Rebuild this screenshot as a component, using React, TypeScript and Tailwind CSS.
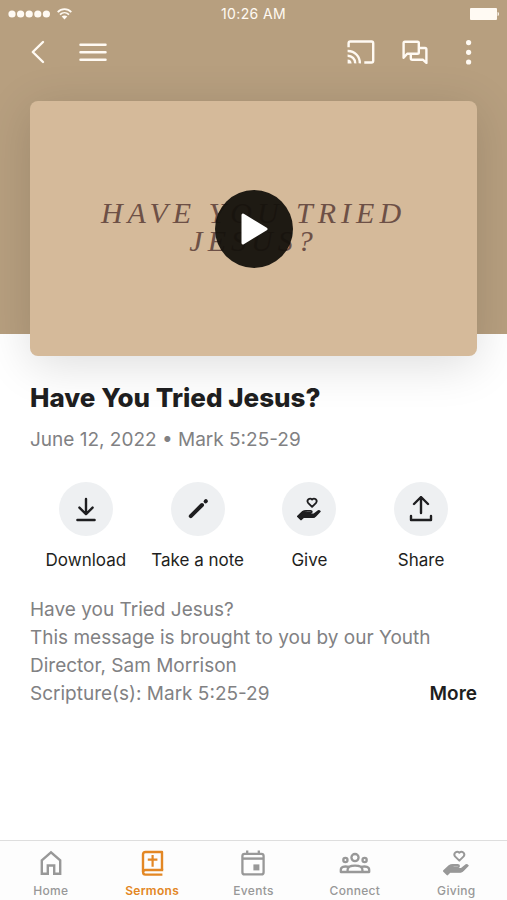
import React from 'react';

const HandHeartIcon: React.FC<{ className?: string }> = ({ className }) => (
  <svg viewBox="0 0 78 78" fill="none" className={className} aria-hidden="true">
    <path d="M49 32 36 19c-6-9 5-18 13-11 8-7 19 2 13 11Z" stroke="currentColor" strokeWidth="6" strokeLinejoin="round" />
    <path
      d="M3 63 19 48q4-3 10-3h15q4 0 4 3t-4 4H32M3 63l10 10 8-8h31q4 0 8-4l14-14"
      fill="none"
      stroke="currentColor"
      strokeWidth="6"
      strokeLinecap="round"
      strokeLinejoin="round"
    />
    <path d="M3 63 20 47l12 0v7h22l14-11q4-2 7 2L61 62q-4 5-9 5H21l-8 7Z" fill="currentColor" />
  </svg>
);

const actions = [
  {
    label: 'Download',
    icon: (
      <svg width="26" height="26" viewBox="0 0 26 26" fill="none" stroke="currentColor" strokeWidth="2.4" strokeLinecap="round" strokeLinejoin="round" aria-hidden="true">
        <path d="M13 3v15M6.4 11.6l6.6 6.6 6.6-6.6M4.4 24h17.2" />
      </svg>
    ),
  },
  {
    label: 'Take a note',
    icon: (
      <svg width="26" height="26" viewBox="0 0 26 26" fill="none" stroke="currentColor" strokeWidth="4" strokeLinecap="round" aria-hidden="true">
        <path d="M5.8 20.2 17 9" />
        <path d="M20.6 5.4 20.9 5.1" />
      </svg>
    ),
  },
  { label: 'Give', icon: <HandHeartIcon className="w-6 h-6" /> },
  {
    label: 'Share',
    icon: (
      <svg width="26" height="26" viewBox="0 0 26 26" fill="none" stroke="currentColor" strokeWidth="2.4" strokeLinecap="round" strokeLinejoin="round" aria-hidden="true">
        <path d="M13 17V2M6 8l7-7 7 7M3 20v4h20v-4" />
      </svg>
    ),
  },
];

const tabs = [
  {
    label: 'Home',
    icon: (
      <svg width="28" height="28" viewBox="0 0 28 28" fill="none" stroke="currentColor" strokeWidth="2.4" aria-hidden="true">
        <path d="M4.8 11.4 14 3.3l9.2 8.1v13.3h-6v-8.2h-6.4v8.2h-6Z" />
      </svg>
    ),
  },
  {
    label: 'Sermons',
    active: true,
    icon: (
      <svg width="28" height="28" viewBox="0 0 28 28" fill="none" stroke="currentColor" strokeWidth="2.4" strokeLinejoin="round" aria-hidden="true">
        <path d="M24 21V3H7.6Q5 3 5 5.6V23" />
        <path d="M25.2 21H7.4a2.3 2.3 0 0 0 0 4.6h17" />
        <path d="M14.6 6v11.8M9.8 10.6h9.6" strokeWidth="2.2" />
      </svg>
    ),
  },
  {
    label: 'Events',
    icon: (
      <svg width="28" height="28" viewBox="0 0 28 28" fill="none" stroke="currentColor" strokeWidth="2.3" aria-hidden="true">
        <rect x="3.4" y="4.8" width="21.2" height="20.6" rx="2.2" />
        <path d="M3.6 9.6h20.8" strokeWidth="2.4" />
        <path d="M8.2 1.5V5M19.8 1.5V5" />
        <rect x="14.4" y="15.4" width="6" height="6" fill="currentColor" stroke="none" />
      </svg>
    ),
  },
  {
    label: 'Connect',
    icon: (
      <svg width="32" height="28" viewBox="0 0 32 28" fill="none" stroke="currentColor" strokeWidth="2.3" strokeLinejoin="round" aria-hidden="true">
        <circle cx="16" cy="8.6" r="3.6" />
        <circle cx="6.4" cy="11" r="2.1" />
        <circle cx="25.6" cy="11" r="2.1" />
        <path d="M8.6 23v-2.2c0-3 3-4.2 7.4-4.2s7.4 1.2 7.4 4.2V23" />
        <path d="M9.8 17.9c-4.8-1-8 0-8 3.1v2h28.4v-2c0-3.1-3.2-4.1-8-3.1" />
      </svg>
    ),
  },
  { label: 'Giving', icon: <HandHeartIcon className="w-[26px] h-[26px]" /> },
];

const StatusBar: React.FC = () => (
  <div className="h-7 px-2 grid grid-cols-3 items-center">
    <div className="flex items-center gap-2">
      <svg width="43" height="8" viewBox="0 0 43 8" fill="currentColor" aria-hidden="true">
        {[4, 12.6, 21.2, 29.8, 38.4].map(x => (
          <circle key={x} cx={x} cy="4" r="3.6" />
        ))}
      </svg>
      <svg width="15" height="12" viewBox="0 0 15 12" fill="none" stroke="currentColor" strokeWidth="1.7" aria-hidden="true" className="-ml-0.5">
        <path d="M.7 4.2C4.5.2 10.5.2 14.3 4.2M3 6.7c2.6-2.6 6.4-2.6 9 0" />
        <path d="M4.7 8.6c1.6-1.6 4-1.6 5.6 0L7.5 11.6Z" fill="currentColor" stroke="none" />
      </svg>
    </div>
    <span className="text-center text-[14px] leading-5 tracking-wide">10:26 AM</span>
    <svg width="29" height="12" viewBox="0 0 29 12" fill="currentColor" className="justify-self-end" aria-hidden="true">
      <rect x="0" y="0" width="27" height="12" rx="1" />
      <path d="M27.6 4q1.4 0 1.4 2t-1.4 2Z" />
    </svg>
  </div>
);

const Toolbar: React.FC = () => (
  <div className="h-12 px-6 flex items-center justify-between">
    <div className="flex items-center gap-7">
      <button aria-label="Back">
        <svg width="27" height="27" viewBox="0 0 27 27" fill="none" stroke="currentColor" strokeWidth="2.4" strokeLinecap="round" strokeLinejoin="round">
          <path d="M19 3 8.8 13 19 23" />
        </svg>
      </button>
      <button aria-label="Menu">
        <svg width="28" height="27" viewBox="0 0 28 27" fill="none" stroke="currentColor" strokeWidth="2.5" strokeLinecap="round">
          <path d="M1.5 5.8h25M1.5 13.3h25M1.5 20.8h25" />
        </svg>
      </button>
    </div>
    <div className="flex items-center gap-[26px]">
      <button aria-label="Cast">
        <svg width="28" height="27" viewBox="0 0 28 27" fill="none" stroke="currentColor" strokeWidth="2.4">
          <path d="M1.6 8.2V4.2q0-1.7 1.7-1.7h21.2q1.7 0 1.7 1.7v17.6q0 1.7-1.7 1.7h-7.2" />
          <path d="M.6 12a11.8 11.8 0 0 1 12.2 12.4M.6 16.8a7.4 7.4 0 0 1 7.6 7.6" />
          <path d="M.6 20.6a4 4 0 0 1 4 3.8h-4Z" fill="currentColor" stroke="none" />
        </svg>
      </button>
      <button aria-label="Chat">
        <svg width="28" height="27" viewBox="0 0 28 27" fill="none" stroke="currentColor" strokeWidth="2.4" strokeLinejoin="round">
          <path d="M2.6 18.8V4q0-1.3 1.3-1.3h12.6q1.3 0 1.3 1.3v9.5q0 1.3-1.3 1.3H6.2Z" />
          <path d="M18 9h6q1.4 0 1.4 1.4v13.5l-3.6-3.2H11.2q-1.4 0-1.4-1.4V15" />
        </svg>
      </button>
      <button aria-label="More options">
        <svg width="28" height="27" viewBox="0 0 28 27" fill="currentColor">
          <circle cx="13.6" cy="3.6" r="2.6" />
          <circle cx="13.6" cy="13.3" r="2.6" />
          <circle cx="13.6" cy="23" r="2.6" />
        </svg>
      </button>
    </div>
  </div>
);

const App: React.FC = () => {
  return (
    <div className="min-h-screen flex flex-col bg-white font-['Inter',sans-serif] text-[#1e1e20]">
      <header className="bg-[#b79f7f] text-[#fffaf3]">
        <StatusBar />
        <Toolbar />
        <div className="px-[30px] pt-[25px]">
          <div className="relative -mb-[22px] aspect-[447/255] rounded-lg bg-[#d5ba9a] shadow-[0_8px_48px_rgba(0,0,0,0.14)] flex items-center justify-center">
            <p className="pb-1 text-center font-['Liberation_Serif',serif] italic text-[30px] leading-7 tracking-[5px] text-[#6d5046]">
              HAVE YOU TRIED
              <br />
              JESUS?
            </p>
            <button aria-label="Play" className="absolute inset-0 m-auto w-[78px] h-[78px] rounded-full bg-[#14110c]/95 text-white flex items-center justify-center">
              <svg width="28" height="34" viewBox="0 0 28 34" fill="currentColor" stroke="currentColor" strokeWidth="3" strokeLinejoin="round">
                <path d="M3 3v28l23-14Z" />
              </svg>
            </button>
          </div>
        </div>
      </header>

      <main className="relative px-[30px] pt-12 pb-8">
        <h1 className="text-[26px] leading-8 font-extrabold">Have You Tried Jesus?</h1>
        <p className="mt-3 text-[19px] leading-7 text-[#818183]">June 12, 2022 • Mark 5:25-29</p>

        <div className="mt-7 grid grid-cols-4">
          {actions.map(action => (
            <button key={action.label} className="flex flex-col items-center gap-3 whitespace-nowrap text-[17px] leading-6">
              <span className="w-[54px] h-[54px] rounded-full bg-[#eef0f2] flex items-center justify-center">
                {action.icon}
              </span>
              {action.label}
            </button>
          ))}
        </div>

        <div className="mt-6 text-[19px] leading-7 text-[#818183]">
          <p>Have you Tried Jesus?</p>
          <p>This message is brought to you by our Youth Director, Sam Morrison</p>
          <div className="flex justify-between">
            <p>Scripture(s): Mark 5:25-29</p>
            <button className="font-semibold text-[#1e1e20]">More</button>
          </div>
        </div>
      </main>

      <nav className="mt-auto h-[60px] border-t border-[#dedede] bg-[#fdfdfd] grid grid-cols-5">
        {tabs.map(tab => (
          <a
            key={tab.label}
            href="#"
            aria-current={tab.active ? 'page' : undefined}
            className={`pt-2 flex flex-col items-center gap-1 text-[12px] leading-5 tracking-wide ${tab.active ? 'font-semibold text-[#e38724]' : 'font-medium text-[#989898]'}`}
          >
            <span className="h-7 flex items-center">{tab.icon}</span>
            {tab.label}
          </a>
        ))}
      </nav>
    </div>
  );
};

export default App;
